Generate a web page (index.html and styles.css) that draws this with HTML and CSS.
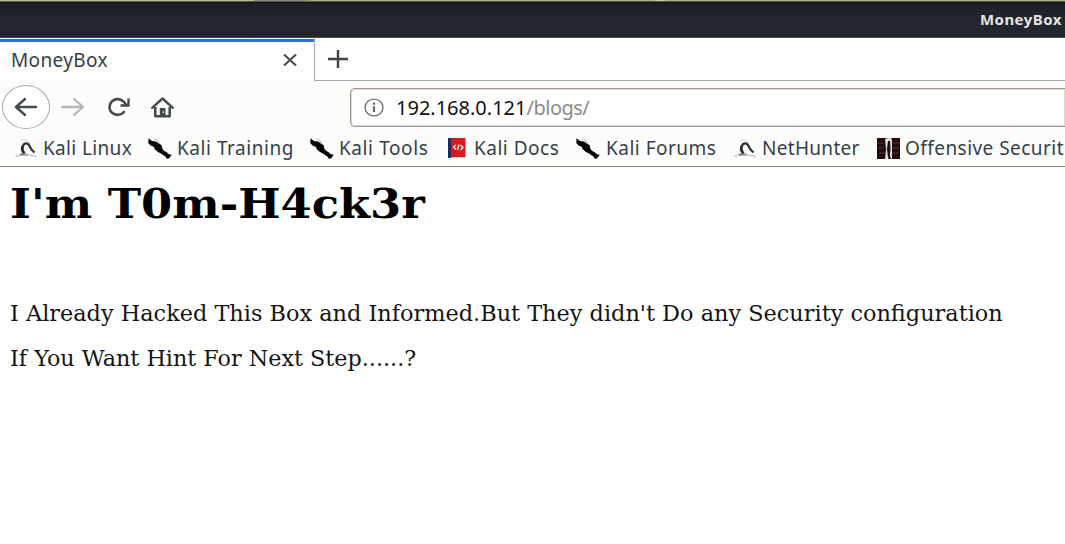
FILE: index.html
```html
<!DOCTYPE html>
<html lang="en">
<head>
<meta charset="utf-8">
<title>MoneyBox</title>
<link rel="stylesheet" href="styles.css">
</head>
<body>
<svg class="defs" width="0" height="0" aria-hidden="true">
  <symbol id="dragon" viewBox="0 0 22 20">
    <path d="M6 2Q12 1 15 5" fill="none" stroke="#c4c4c4" stroke-width=".8"/>
    <path d="M8 8C9 4.500 13 4.500 14.500 8C15.500 10.500 17 12.500 19.500 14.500" fill="none" stroke="#333" stroke-width="2.200"/>
    <path d="M8 7.500C6.500 11 7 13 9.500 15.500" fill="none" stroke="#2b2b2b" stroke-width="2.800"/>
    <path d="M5 16.500H12.500" fill="none" stroke="#444" stroke-width="1.600"/>
    <path d="M.5 18.500Q10 15 21.500 18.500" fill="none" stroke="#b5b5b5" stroke-width="1.100"/>
  </symbol>
  <symbol id="knife" viewBox="0 0 24 21">
    <path d="M.5 .3L4 3L8 3.500L11.500 6L13.500 7L14.500 11L16 12.800L19 14.500L20.500 16L23.500 16.700L23 18L20.500 20.800L18.500 20.500L17.500 18.500L15 17L13 15.500L10 14L6.500 11L6 9L2.500 7.500L.3 5Z" fill="#050505"/>
    <path d="M6 .8Q11 1.500 12 6" fill="none" stroke="#aaa" stroke-width=".8"/>
  </symbol>
</svg>
<div class="desktop-edge"></div>
<header class="titlebar"><span class="window-title">MoneyBox</span></header>
<div class="tabs">
  <div class="tab"><span class="tab-label">MoneyBox</span>
    <svg class="close" width="16" height="14" viewBox="0 0 16 14"><path d="M2 1.500L14 12.500M14 1.500L2 12.500" stroke="#4a5053" stroke-width="2.200"/></svg>
  </div>
  <div class="tab-rest"><svg width="20" height="18" viewBox="0 0 20 18"><path d="M0 9H20M10 0V18" stroke="#3f4548" stroke-width="2.400"/></svg></div>
</div>
<nav class="toolbar">
  <div class="back"><svg width="24" height="20" viewBox="0 0 24 20"><path d="M22 10H2M11 2L2 10L11 18" fill="none" stroke="#454b4e" stroke-width="2.400" stroke-linecap="round" stroke-linejoin="round"/></svg></div>
  <svg class="forward" width="24" height="20" viewBox="0 0 24 20"><path d="M1 10H22M13 2L22 10L13 18" fill="none" stroke="#b5b6b5" stroke-width="2.300" stroke-linecap="round" stroke-linejoin="round"/></svg>
  <svg class="reload" width="22" height="20" viewBox="0 0 22 20"><path d="M16 15A8.200 7.900 0 1 1 16 5L18.500 8" fill="none" stroke="#454b4e" stroke-width="2.600" stroke-linecap="round"/><path d="M20.500 1.500V8.500H12.500" fill="none" stroke="#454b4e" stroke-width="2.400"/></svg>
  <svg class="home" width="23" height="21" viewBox="0 0 23 21"><path d="M1.200 10.800L11.500 1.500L21.800 10.800" fill="none" stroke="#454b4e" stroke-width="2.400" stroke-linecap="round" stroke-linejoin="round"/><path d="M4.300 10V19.300H18.700V10" fill="none" stroke="#454b4e" stroke-width="2.600" stroke-linejoin="round"/><path d="M8.800 11H14.500V19H8.800Z" fill="#454b4e"/><path d="M11.800 14.500H13V16H11.800Z" fill="#fff"/></svg>
  <div class="address">
    <svg width="20" height="19" viewBox="0 0 20 19"><ellipse cx="10" cy="9.500" rx="9" ry="8.400" fill="none" stroke="#737373" stroke-width="1.400"/><path d="M10 4.500V6.700M10 8.300V14" stroke="#666" stroke-width="2.200"/></svg>
    <span class="url"><span class="host">192.168.0.121</span><span class="path">/blogs/</span></span>
  </div>
</nav>
<div class="bookmarks">
  <a class="mark linux"><svg width="22" height="20"><use href="#dragon"/></svg><span>Kali Linux</span></a>
  <a class="mark training"><svg width="24" height="21"><use href="#knife"/></svg><span>Kali Training</span></a>
  <a class="mark tools"><svg width="24" height="21"><use href="#knife"/></svg><span>Kali Tools</span></a>
  <a class="mark docs"><svg width="18" height="20" viewBox="0 0 18 20"><path d="M0 0H17.500V19H0Z" fill="#d71c20"/><path d="M0 0H3V20H0Z" fill="#202b5c"/><path d="M3 19H17.500V20H3Z" fill="#ccc"/><path d="M8 7L5.500 9L8 11.500M12.500 7L15 9.500L12.500 12M11 6.500L9.500 12" fill="none" stroke="#fff" stroke-width="1.200"/></svg><span>Kali Docs</span></a>
  <a class="mark forums"><svg width="24" height="21"><use href="#knife"/></svg><span>Kali Forums</span></a>
  <a class="mark hunter"><svg width="22" height="20"><use href="#dragon"/></svg><span>NetHunter</span></a>
  <a class="mark offsec"><svg width="23" height="21" viewBox="0 0 23 21"><path d="M0 0H23V21H0Z" fill="#210c0e"/><path d="M1 5H7M1 10H7M2 15H8M16 5H22M16 10H22M15 15H21" stroke="#563334"/><path d="M8 1L11 0H14L15 2V21H14L12.500 16L11 21H8L9 12Z" fill="#ddd"/><path d="M11 3H13L13.500 12L12.500 19H11L10 11Z" fill="#151010"/></svg><span>Offensive Securit</span></a>
</div>
<main class="page">
  <h1>I'm T0m-H4ck3r</h1>
  <p class="first">I Already Hacked This Box and Informed.But They didn't Do any Security configuration</p>
  <p class="second">If You Want Hint For Next Step......?</p>
</main>
</body>
</html>
```
FILE: styles.css
```css
* { box-sizing: border-box; }
html, body { width: 100%; height: 100%; }
body { margin: 0; overflow: hidden; display: flex; flex-direction: column; background: #fff; font-family: "Noto Sans", sans-serif; color: #34404a; }
svg { display: block; flex: none; }
.defs { position: absolute; }
.desktop-edge { height: 2px; flex: none; background: linear-gradient(90deg, #b9bba3 0 254px, #85877a 254px 309px, #aaa98a 309px 655px, #c7c8ba 655px 665px, #aaa98a 665px); border-bottom: 1px solid #5b5c50; }
.titlebar { height: 36px; flex: none; background: linear-gradient(#1d1e25, #22272f 55%, #22252d); border-top: 1px solid #101216; border-bottom: 1px solid #484852; padding: 0 0 2px 980px; display: flex; align-items: center; }
.window-title { color: #e4e5e4; font-weight: 700; font-size: 15px; letter-spacing: .45px; line-height: 20px; white-space: nowrap; }
.tabs { height: 43px; flex: none; display: flex; background: #fdfdfb; }
.tab { width: 314px; flex: none; border-top: 3px solid #2873cf; margin-top: 1px; padding: 0 16px 4px 11px; display: flex; align-items: center; justify-content: space-between; }
.tab-label { font-size: 19px; letter-spacing: .35px; line-height: 26px; }
.tab-rest { flex: 1; border-left: 1px solid #aaa; border-bottom: 1px solid #aaa; padding: 12px 0 0 13px; }
.toolbar { height: 50px; flex: none; display: flex; align-items: center; background: #fcfcfa; padding: 2px 0 0 2px; }
.back { width: 48px; height: 44px; border: 1px solid #aaa; border-radius: 50%; background: #fff; display: grid; place-items: center; flex: none; }
.forward { margin-left: 11px; }
.reload { margin-left: 23px; }
.home { margin-left: 21px; }
.address { height: 39px; flex: 1; margin-left: 176px; border: 1px solid #a0968f; border-right: 0; border-radius: 5px 0 0 5px; box-shadow: inset 0 0 0 1px #ddd9d5; background: #fff; display: flex; align-items: center; padding-left: 13px; gap: 12px; }
.url { font-size: 20px; line-height: 28px; padding-top: 1px; white-space: nowrap; }
.host { color: #111; }
.path { color: #8b8b8b; letter-spacing: -.5px; }
.bookmarks { height: 36px; flex: none; display: flex; background: #fcfcfa; border-bottom: 1px solid #8f8174; padding-left: 15px; }
.mark { display: flex; flex: none; align-items: center; gap: 6px; height: 34px; font-size: 19px; letter-spacing: .5px; line-height: 26px; white-space: nowrap; }
.linux { width: 133px; letter-spacing: .35px; }
.training { width: 162px; gap: 5px; letter-spacing: .55px; }
.tools { width: 138px; gap: 5px; letter-spacing: .6px; }
.docs { width: 128px; gap: 8px; }
.forums { width: 158px; }
.hunter { width: 143px; letter-spacing: .3px; }
.offsec { gap: 5px; letter-spacing: .45px; }
.page { flex: 1; padding-left: 10px; color: #000; font-family: "DejaVu Serif", serif; }
h1, p { width: max-content; white-space: nowrap; transform-origin: left center; }
h1 { margin: 13px 0 0; font-size: 41px; line-height: 48px; transform: scaleX(1.093); }
p { margin: 0; font-size: 22px; line-height: 30px; color: #151515; transform: scaleX(1.018); }
.first { margin-top: 71px; }
.second { margin-top: 15px; transform: scaleX(1.013); }
```
